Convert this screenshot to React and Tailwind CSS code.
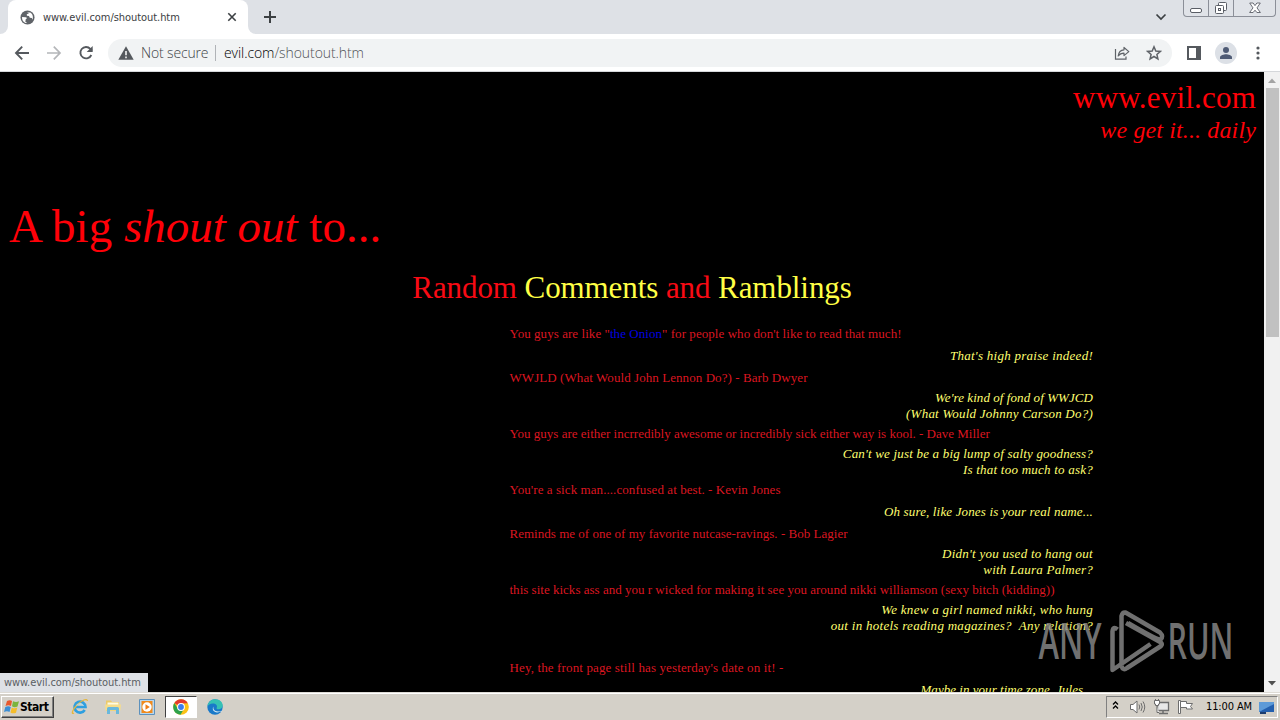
import React from "react";

const comments = [
  { gap: "mt-0", ask: true, lines: [{ parts: ['You guys are like "', "the Onion", '" for people who don\'t like to read that much!'], sp: "tracking-[0.057px]" }] },
  { gap: "mt-[6px]", lines: [{ parts: ["That's high praise indeed!"], sp: "tracking-[0.27px]" }] },
  { gap: "mt-[6px]", ask: true, lines: [{ parts: ["WWJLD (What Would John Lennon Do?) - Barb Dwyer"], sp: "tracking-[0.07px]" }] },
  { gap: "mt-1", lines: [{ parts: ["We're kind of fond of WWJCD"], sp: "tracking-[0.07px]" }, { parts: ["(What Would Johnny Carson Do?)"], sp: "tracking-[0.23px]" }] },
  { gap: "mt-1", ask: true, lines: [{ parts: ["You guys are either incrredibly awesome or incredibly sick either way is kool. - Dave Miller"], sp: "tracking-normal" }] },
  { gap: "mt-1", lines: [{ parts: ["Can't we just be a big lump of salty goodness?"], sp: "tracking-[0.19px]" }, { parts: ["Is that too much to ask?"], sp: "tracking-[0.23px]" }] },
  { gap: "mt-1", ask: true, lines: [{ parts: ["You're a sick man....confused at best. - Kevin Jones"], sp: "tracking-[0.075px]" }] },
  { gap: "mt-[6px]", lines: [{ parts: ["Oh sure, like Jones is your real name..."], sp: "tracking-[0.15px]" }] },
  { gap: "mt-[6px]", ask: true, lines: [{ parts: ["Reminds me of one of my favorite nutcase-ravings. - Bob Lagier"], sp: "tracking-[0.02px]" }] },
  { gap: "mt-1", lines: [{ parts: ["Didn't you used to hang out"], sp: "tracking-[0.26px]" }, { parts: ["with Laura Palmer?"], sp: "tracking-[0.24px]" }] },
  { gap: "mt-1", ask: true, lines: [{ parts: ["this site kicks ass and you r wicked for making it see you around nikki williamson (sexy bitch (kidding))"], sp: "tracking-[0.012px]" }] },
  { gap: "mt-1", lines: [{ parts: ["We knew a girl named nikki, who hung"], sp: "tracking-[0.3px]" }, { parts: ["out in hotels reading magazines?\u00a0 Any relation?"], sp: "tracking-[0.28px]" }] },
  { gap: "mt-[26px]", ask: true, lines: [{ parts: ["Hey, the front page still has yesterday's date on it! -"], sp: "tracking-[0.13px]" }] },
  { gap: "mt-[6px]", lines: [{ parts: ["Maybe in your time zone, Jules..."], sp: "tracking-[0.03px]" }] },
];

function TabStrip() {
  return (
    <div className="flex h-[34px] items-start bg-[#dee1e6]">
      <div className="flex h-[34px] w-2 items-end bg-white">
        <div className="h-[34px] w-2 rounded-br-lg bg-[#dee1e6]" />
      </div>
      <div className="flex h-[34px] w-[240px] items-center rounded-t-lg bg-white pr-2.5 pl-3">
        <svg width="15" height="15" viewBox="0 0 16 16" className="mr-2 shrink-0">
          <circle cx="8" cy="8" r="7.5" fill="#5f6368" />
          <path d="M2.2 7.5 6 7.6c1.800 0 1.600 2 .2 2.100L5.700 12.500 7.600 13.900C4.400 14.200 1.900 11.500 2.200 7.500zM7.200 2.300 9.500 2.200 9.200 3.800 7.200 4.500 7.400 6.200 9.600 6.400 10.400 8.300 12.600 8.400 13.300 10.300C14.500 7.300 13.400 3.900 10.800 2.600" fill="#fff" />
        </svg>
        <span className="pt-px font-['DejaVu_Sans_Condensed','DejaVu_Sans',sans-serif] text-[11px] leading-4 tracking-[-0.06px] whitespace-nowrap text-[#3c4043]">www.evil.com/shoutout.htm</span>
        <svg width="10" height="10" viewBox="0 0 10 10" className="mr-[1px] ml-auto shrink-0">
          <path d="m1.300 1.300 7.400 7.400m0-7.400-7.400 7.400" stroke="#3c4043" strokeWidth="1.600" />
        </svg>
      </div>
      <div className="flex h-[34px] w-[22px] items-center bg-white">
        <div className="h-[34px] w-[22px] rounded-bl-lg bg-[#dee1e6]" />
      </div>
      <svg width="12" height="12" viewBox="0 0 12 12" className="mt-[11px] -ml-[6px]">
        <path d="M6 0v12M0 6h12" stroke="#3c4043" strokeWidth="2" />
      </svg>
      <svg width="12" height="8" viewBox="0 0 12 8" className="mt-[13px] ml-auto">
        <path d="m1.500 1.500 4.500 4.500 4.500-4.500" fill="none" stroke="#3c4043" strokeWidth="1.700" />
      </svg>
      <div className="mr-1 ml-[16px] flex h-[17px] w-[93px] rounded-b-[4px] border border-t-0 border-[#8b8f98] bg-[#e0e3e8]">
        <div className="flex w-[25px] items-end justify-center border-r border-[#8b8f98] pb-[3px]">
          <div className="h-[5px] w-3 rounded-[2px] border border-[#5a5e66] bg-white" />
        </div>
        <div className="flex w-[25px] items-center justify-center border-r border-[#8b8f98]">
          <svg width="14" height="14" viewBox="0 0 14 14" fill="#fff" stroke="#5a5e66">
            <rect x="4.500" y="1.500" width="8" height="8" rx="1" />
            <rect x="1.500" y="4.500" width="8" height="8" rx="1" />
            <rect x="4.500" y="7.500" width="2" height="2" />
          </svg>
        </div>
        <div className="flex flex-1 items-center justify-center">
          <svg width="12" height="12" viewBox="0 0 12 12">
            <path d="M.7 1h3.400L6 3.600 7.900 1h3.400L8 5.900l3.400 4.600H7.900L6 8.200l-1.900 2.300H.6L4 5.900z" fill="#fff" stroke="#5a5e66" strokeWidth=".9" />
          </svg>
        </div>
      </div>
    </div>
  );
}

function Toolbar() {
  return (
    <div className="flex h-[38px] items-center border-b border-[#d5d7da] bg-white pl-[14px]">
      <svg width="16" height="16" viewBox="0 0 16 16" fill="none" stroke="#55595e" strokeWidth="1.900">
        <path d="M15 8H2.500M8.200 1.700 2 8l6.200 6.300" />
      </svg>
      <svg width="16" height="16" viewBox="0 0 16 16" fill="none" stroke="#b4b6b9" strokeWidth="1.700" className="ml-4">
        <path d="M1 8h12.500M7.800 1.700 14 8l-6.200 6.300" />
      </svg>
      <svg width="16" height="16" viewBox="0 0 16 16" fill="none" stroke="#55595e" strokeWidth="1.900" className="ml-4">
        <path d="M13.300 10a5.700 5.700 0 1 1-1-6.200L14 5.600" />
        <path d="M14.700 1v6H8.700z" fill="#55595e" stroke="none" />
      </svg>
      <div className="ml-[14px] flex h-[28px] w-[1064px] items-center rounded-full bg-[#f1f3f4] pr-[10px] pl-[10px]">
        <svg width="16" height="14" viewBox="0 0 16 14">
          <path d="M8 .3 15.700 13.700H.3z" fill="#55595e" />
          <path d="M8 5v4.300M8 10.500v1.700" stroke="#fff" strokeWidth="1.500" />
        </svg>
        <span className="ml-[7px] w-[67px] font-['Open_Sans',sans-serif] text-[14px] leading-5 font-light tracking-[-0.15px] whitespace-nowrap text-[#3f4347]">Not secure</span>
        <div className="ml-[7px] h-4 w-px bg-[#b0b3b7]" />
        <span className="ml-2 font-['Open_Sans',sans-serif] text-[14px] leading-5 font-light tracking-[-0.08px] whitespace-nowrap text-[#505458]">
          <span className="text-black">evil.com</span>/shoutout.htm
        </span>
        <svg width="16" height="16" viewBox="0 0 16 16" fill="none" stroke="#5f6368" strokeWidth="1.200" className="ml-auto">
          <path d="M1.500 4v10.200H12V11.500" />
          <path d="M10 2.500v2.300C6.500 5 4.600 7.500 4.200 11 5.600 9 7.300 8.200 10 8.200v2.400l4.800-4z" strokeLinejoin="round" />
        </svg>
        <svg width="16" height="16" viewBox="0 0 16 16" fill="none" stroke="#5f6368" strokeWidth="1.500" className="ml-4">
          <path d="m8 1.800 1.800 4.200 4.500.4-3.400 3 1 4.500L8 11.500l-3.900 2.400 1-4.500-3.400-3 4.500-.4z" />
        </svg>
      </div>
      <svg width="14" height="14" viewBox="0 0 14 14" className="ml-[15px]">
        <path d="M1 1h12v12H1z" fill="#fff" stroke="#55595e" strokeWidth="2" />
        <path d="M9 1h4v12H9z" fill="#55595e" />
      </svg>
      <div className="ml-[14px] flex h-[22px] w-[22px] items-center justify-center rounded-full bg-[#dce0e6]">
        <svg width="14" height="14" viewBox="0 0 14 14" fill="#4f5b75">
          <circle cx="7" cy="4" r="3" />
          <path d="M1 13v-1.700C1 9.200 5 8.300 7 8.300s6 .9 6 3V13z" />
        </svg>
      </div>
      <svg width="4" height="14" viewBox="0 0 4 14" fill="#55595e" className="ml-[19px]">
        <circle cx="2" cy="2" r="1.600" />
        <circle cx="2" cy="7" r="1.600" />
        <circle cx="2" cy="12" r="1.600" />
      </svg>
    </div>
  );
}

function Page() {
  return (
    <div className="h-[620px] w-[1264px] overflow-hidden bg-black font-['Liberation_Serif',serif] text-[#ff0008]">
      <div className="pt-2 pr-2 text-right">
        <p className="h-[36px] text-[31px] leading-[36px] tracking-[0.2px]">www.evil.com</p>
        <p className="h-[30px] text-[24px] leading-[29px] tracking-[0.13px] italic">we get it... daily</p>
      </div>
      <h1 className="mt-[52px] ml-[9px] h-[56px] text-[47px] leading-[56px]">
        A big <i>shout out</i> to...
      </h1>
      <h2 className="mt-[16px] h-[37px] text-center text-[31px] leading-[36px] tracking-[-0.08px] text-[#f80a14]">
        Random <span className="text-[#ffff45]">Comments</span> and <span className="text-[#ffff45]">Ramblings</span>
      </h2>
      <div className="mt-[19px] ml-[509.5px] w-[583.5px] text-[13px] leading-4">
        {comments.map((c, i) => (
          <div key={i} className={`${c.gap} ${c.ask ? "text-[#dc1620]" : "text-right text-[#ffff70] italic"}`}>
            {c.lines.map((l, j) => (
              <p key={j} className={`h-4 whitespace-nowrap ${l.sp}`}>
                {l.parts.map((t, k) => (k === 1 ? <a key={k} className="text-[#0000e0]">{t}</a> : t))}
              </p>
            ))}
          </div>
        ))}
      </div>
    </div>
  );
}

function Scrollbar() {
  return (
    <div className="flex h-[620px] w-4 flex-col items-center bg-[#f1f1f1]">
      <svg width="16" height="16" viewBox="0 0 16 16"><path d="m4 11 4-4.500 4 4.500z" fill="#a3a3a3" /></svg>
      <div className="h-[249px] w-[13px] bg-[#c1c1c1]" />
      <svg width="16" height="16" viewBox="0 0 16 16" className="mt-auto"><path d="m4 5 4 4.500L12 5z" fill="#505050" /></svg>
    </div>
  );
}

function Watermark() {
  return (
    <svg width="200" height="66" viewBox="0 0 200 66" className="absolute top-[609px] left-[1038px] opacity-80">
      <g fill="#8c8c8c" fontFamily="'Open Sans', sans-serif" fontSize="50" fontWeight="600">
        <text x="0.500" y="50" textLength="63" lengthAdjust="spacingAndGlyphs">ANY</text>
        <text x="129.500" y="50" textLength="66" lengthAdjust="spacingAndGlyphs">RUN</text>
      </g>
      <g fill="none" stroke="#8c8c8c" strokeWidth="4.500" strokeLinejoin="round">
        <path d="M79.500 20.500q-4.500-4-5 2V61l38-26" />
        <path d="M83.500 55V7q1-4 4-3.500L122 23.500q4 4 .500 7Q119 31 90 14" />
        <path d="M88 14l35 19.500q1.500 1.500 0 3.500L89 59q-4 3-5.500-2" />
      </g>
    </svg>
  );
}

function Taskbar() {
  return (
    <div className="flex h-7 items-center border-t border-[#dedbd5] bg-[#d4d0c8] pt-[2px] shadow-[inset_0_1px_0_#ffffff]">
      <div className="-mt-[2px] ml-[1px] flex h-[22px] w-[53px] items-center border border-t-white border-r-[#404040] border-b-[#404040] border-l-white pl-[2px] shadow-[inset_-1px_-1px_0_#808080]">
        <svg width="16" height="15" viewBox="0 0 16 15" className="shrink-0">
          <path d="M3 2q3-1.700 5 0L7 7Q4.500 5.500 1.500 7z" fill="#e8582c" />
          <path d="M9 2.300q3 1.500 6 0L13.500 7.500q-3 1.500-5.500-.2z" fill="#7bb43c" />
          <path d="M1.300 8q3-1.500 5.500 0L5.500 13Q3 11.500 0 13z" fill="#3c8ed4" />
          <path d="M7.800 8.400q2.700 1.600 5.500.2L12 13.700q-3 1.300-5.500-.3z" fill="#f5bd2b" />
        </svg>
        <span className="font-['DejaVu_Sans_Condensed','DejaVu_Sans',sans-serif] text-[12px] leading-4 font-bold tracking-[-0.45px] text-black">Start</span>
      </div>
      <svg width="18" height="18" viewBox="0 0 18 18" className="-mt-[2px] ml-[17px]">
        <path d="M13.700 12A5.500 5.500 0 1 1 14.500 9H4.500" fill="none" stroke="#2e9fe0" strokeWidth="2.700" />
        <path d="M3 15c-3 2-2-3 3-8s10-7 10.500-4" fill="none" stroke="#e6b63c" strokeWidth="1.300" />
        <path d="M5.500 7.500q3-3.500 7 0" fill="none" stroke="#a5dcf8" strokeWidth="1" />
      </svg>
      <svg width="18" height="16" viewBox="0 0 18 16" className="-mt-[2px] ml-[15px]">
        <path d="M2 1.500h5l1 1.500h7v9H2z" fill="#ecca6a" />
        <path d="M3.500 3.500h11V8h-11z" fill="#fffbe0" />
        <path d="M1 5.500h16l-.7 6H1.700z" fill="#f6dd8b" />
        <path d="M3 15V9.500q0-1.500 1.500-1.500h9q1.500 0 1.500 1.500V15h-3v-4H6v4z" fill="#69b8dc" />
      </svg>
      <svg width="16" height="16" viewBox="0 0 16 16" className="-mt-[2px] ml-[17px]">
        <path d="M.5.5h15v15H.5z" fill="#b9d7ee" stroke="#5c91bd" />
        <path d="M2.500 2h11v12h-11z" fill="#f08a1d" />
        <circle cx="8" cy="8" r="4.700" fill="#fff" />
        <path d="m6.500 5.200 4.300 2.800-4.300 2.800z" fill="#ef7d17" />
      </svg>
      <div className="-mt-[2px] ml-[10px] flex h-[22px] w-8 items-center justify-center border border-t-[#404040] border-r-white border-b-white border-l-[#404040] bg-white">
        <svg width="16" height="16" viewBox="0 0 16 16">
          <circle cx="8" cy="8" r="7.800" fill="#fbc116" />
          <path d="M8 8 1.300 4A7.800 7.800 0 0 1 14.800 4.200L8 4.500z" fill="#e33b2e" />
          <path d="M1.300 4A7.800 7.800 0 0 0 7.500 15.800L11 9.800 8 8 4.800 9.700z" fill="#2da24c" />
          <circle cx="8" cy="8" r="3.900" fill="#fff" />
          <circle cx="8" cy="8" r="2.900" fill="#3b7ded" />
        </svg>
      </div>
      <svg width="16" height="16" viewBox="0 0 16 16" className="-mt-[2px] ml-[10px]">
        <circle cx="8" cy="8" r="7.700" fill="#1979c9" />
        <path d="M.4 7.500C1 3 4.200.3 8.200.3c4.500 0 7.600 3 7.500 6.200 0 2.400-2 3.800-4.200 3.800-1.500 0-2.400-.6-1.800-1.500C11 6.500 8.500 4.500 6 4.500 3 4.500 1 6 .4 7.500z" fill="#35c1b4" />
        <path d="M6.500 7.500C5.700 10.500 8 13.500 14 12c.7-.2 1 .2.500.8l-1.500-.2q-3 1.600-5.200.2C5.500 11.500 5.300 9 6.500 7.500z" fill="#d4e8f2" />
      </svg>
      <div className="-mt-[1px] mr-[2px] ml-auto flex h-[22px] w-[172px] items-center border border-t-[#808080] border-r-white border-b-white border-l-[#808080] pl-[5px]">
        <svg width="7" height="9" viewBox="0 0 7 9" fill="none" stroke="#000" strokeWidth="1.300" className="mb-[3px]">
          <path d="m1 3.500 2.500-2.500L6 3.500M1 7.500 3.500 5 6 7.500" />
        </svg>
        <svg width="17" height="16" viewBox="0 0 17 16" fill="none" stroke="#6d6d6d" className="ml-[10px]">
          <path d="M1.500 5.500H4L8 2v12L4 10.500H1.500z" fill="#fff" />
          <path d="M10 5.500q1.500 2.500 0 5M12 4q2.500 4 0 8M14 2.500q3.500 5.500 0 11" />
        </svg>
        <svg width="17" height="16" viewBox="0 0 17 16" fill="none" stroke="#6d6d6d" className="ml-[7px]">
          <path d="M4.500 3.500h11v8h-11z" fill="#e8e8e8" strokeWidth="1.300" />
          <path d="M10 12v2M6 14.500h9" strokeWidth="1.500" />
          <path d="M1.500 1.500h5V5H5.500v1.500h-3V5h-1zM2.500 0v2M5.500 0v2M4 6.500v7h2" fill="#fff" />
        </svg>
        <svg width="18" height="16" viewBox="0 0 18 16" stroke="#6d6d6d" className="ml-[7px]">
          <path d="M1.500 1.500h2v13h-2z" fill="#fff" />
          <path d="M3.500 2.500h6v2h6L13.500 7.500l2 2.500h-6V8.500h-6z" fill="#fff" />
        </svg>
        <span className="ml-[11px] w-[48px] font-['DejaVu_Sans_Condensed','DejaVu_Sans',sans-serif] text-[11px] leading-4 tracking-[-0.12px] whitespace-nowrap text-black">11:00 AM</span>
        <svg width="15" height="13" viewBox="0 0 15 13" className="ml-[5px]">
          <path d="M0 1h15v10H0z" fill="#245fae" />
          <path d="M0 11 15 3V1H0z" fill="#5d9ad8" />
          <path d="M1 11h6v2H1z" fill="#1c3d70" />
        </svg>
      </div>
    </div>
  );
}

export default function App() {
  return (
    <div className="relative flex h-[720px] w-[1280px] flex-col overflow-hidden">
      <TabStrip />
      <Toolbar />
      <div className="flex">
        <Page />
        <Scrollbar />
      </div>
      <Watermark />
      <div className="absolute top-[673px] left-0 flex h-[19px] w-[148px] items-center bg-[#dee1e6] pt-px pl-1">
        <span className="font-['DejaVu_Sans_Condensed','DejaVu_Sans',sans-serif] text-[11px] leading-4 tracking-[-0.06px] whitespace-nowrap text-[#5a5e63]">www.evil.com/shoutout.htm</span>
      </div>
      <Taskbar />
    </div>
  );
}
